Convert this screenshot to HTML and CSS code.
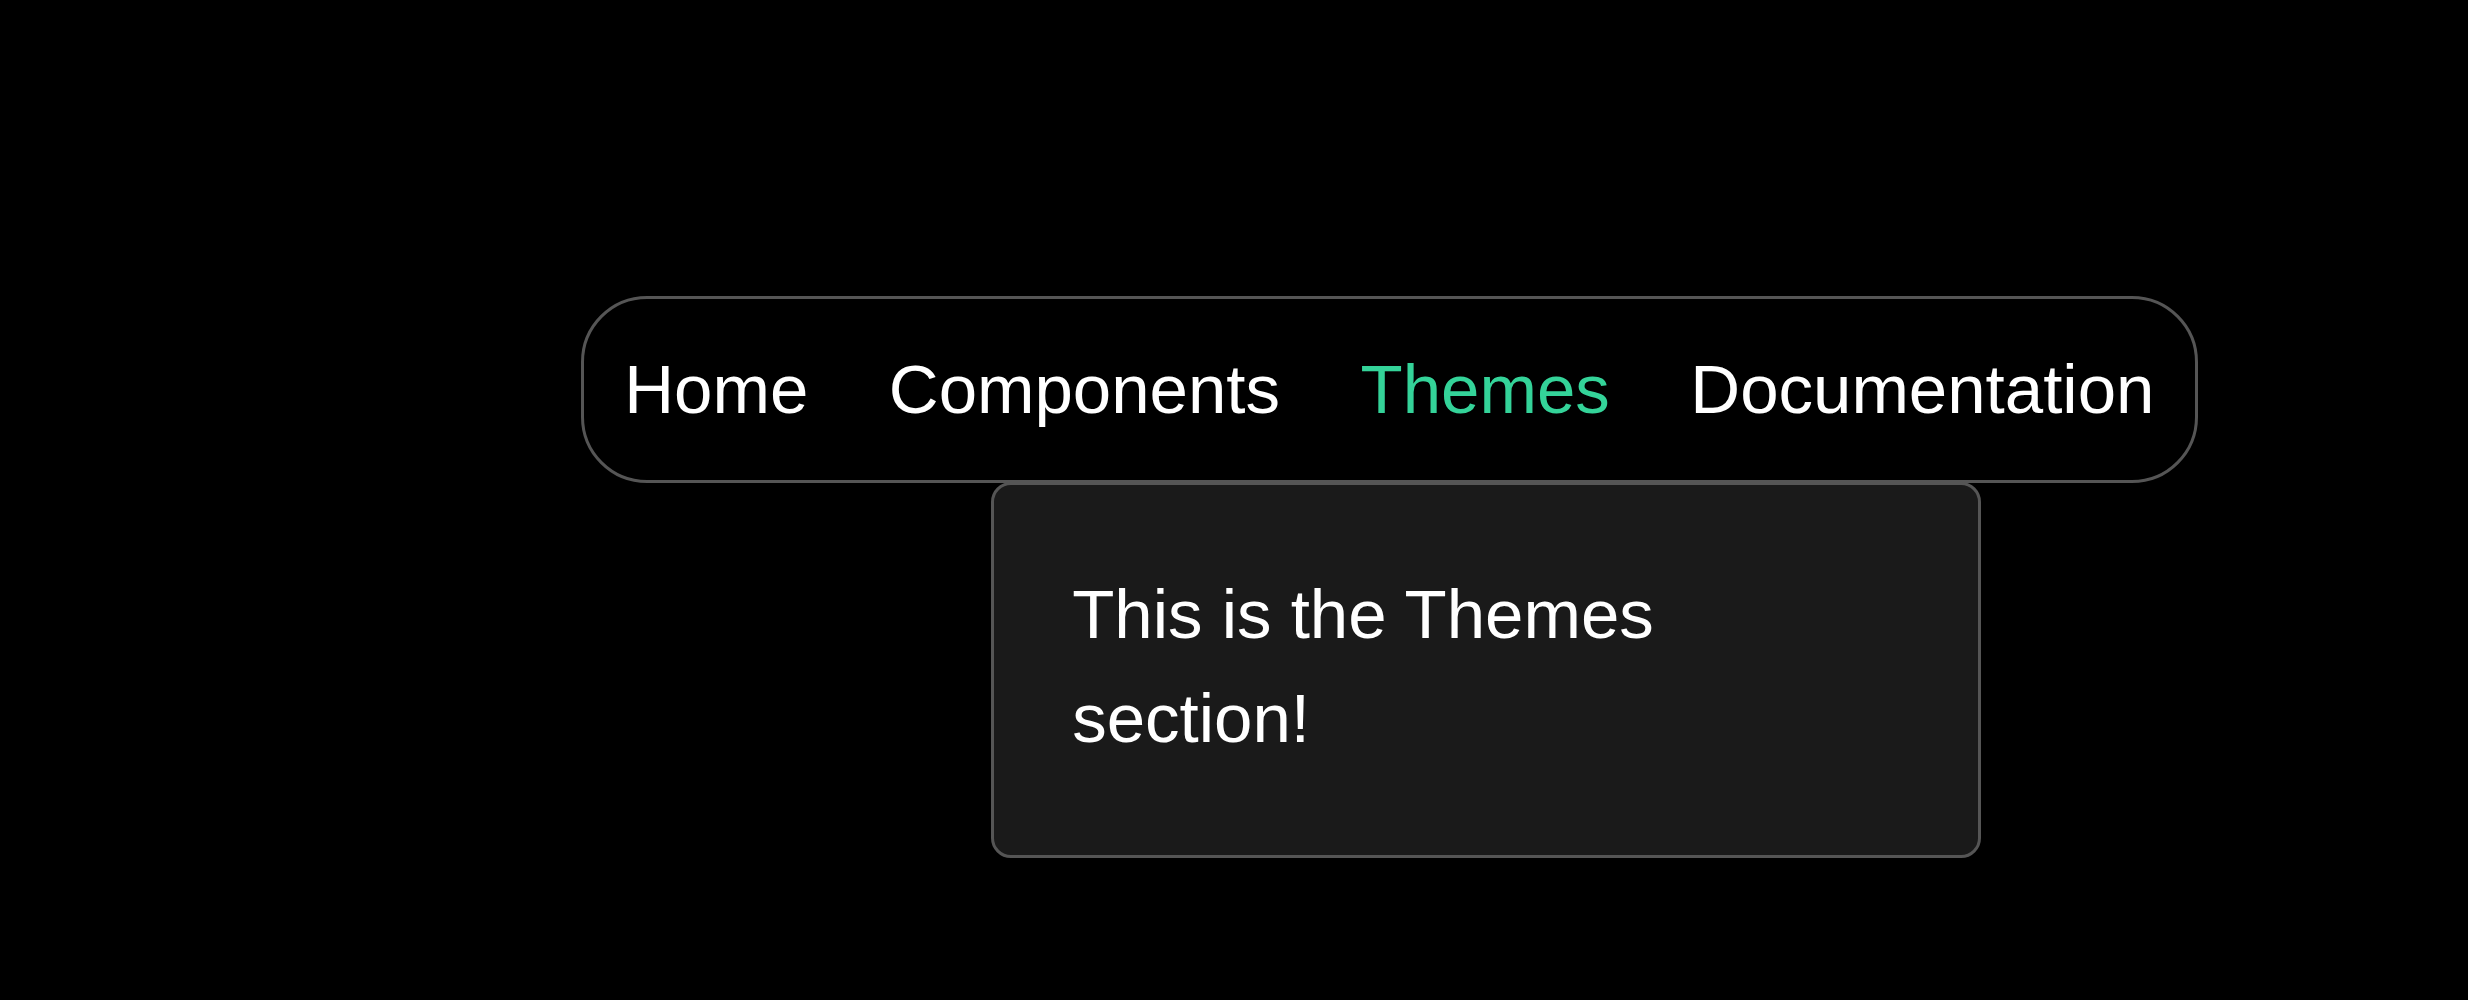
FILE: index.html
```html
<!DOCTYPE html>
<html lang="en">
<head>
<meta charset="utf-8">
<title>Nav</title>
<link rel="stylesheet" href="styles.css">
</head>
<body>
<div class="stage">
  <nav class="nav">
    <a class="nav-link" href="#">Home</a>
    <a class="nav-link" href="#">Components</a>
    <div class="nav-item">
      <a class="nav-link active" href="#">Themes</a>
      <div class="dropdown">
        <p class="dropdown-text">This is the Themes section!</p>
      </div>
    </div>
    <a class="nav-link" href="#">Documentation</a>
  </nav>
</div>
</body>
</html>
```
FILE: styles.css
```css
html, body {
  margin: 0;
  padding: 0;
  background: #000;
}
body {
  font-family: "Liberation Sans", Arial, sans-serif;
  color: #fff;
  width: 2468px;
  height: 1000px;
  overflow: hidden;
}
.stage {
  padding: 296px 0 0 581px;
  display: flex;
}
.nav {
  display: flex;
  align-items: stretch;
  border: 3px solid #555;
  border-radius: 66px;
  background: #000;
}
.nav-item {
  position: relative;
  display: flex;
}
.nav-link {
  display: block;
  padding: 52px 40.25px;
  font-size: 69px;
  line-height: 77px;
  color: #fff;
  text-decoration: none;
  white-space: nowrap;
}
.nav-link.active {
  color: #34d399;
}
.dropdown {
  position: absolute;
  top: calc(100% + 2px);
  left: 50%;
  margin-left: -494px;
  width: 990px;
  box-sizing: border-box;
  background: #1a1a1a;
  border: 3px solid #555;
  border-radius: 20px;
  padding: 78px 78px 85px;
}
.dropdown-text {
  margin: 0;
  font-size: 69px;
  line-height: 103.5px;
  color: #fff;
}
```
